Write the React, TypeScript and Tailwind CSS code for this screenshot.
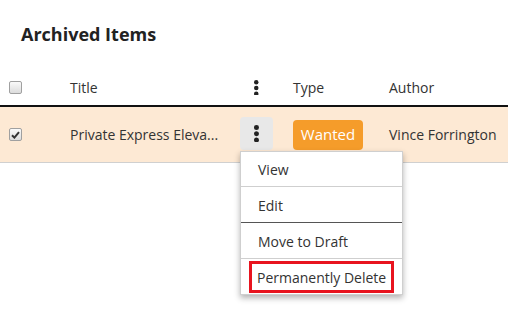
import React from "react";

function Kebab({ size = 4, gap = 2 }: { size?: number; gap?: number }) {
  const h = size * 3 + gap * 2;
  return (
    <svg width={size + 2} height={h} viewBox={`0 0 ${size + 2} ${h}`}>
      {[0, 1, 2].map((i) => (
        <circle key={i} cx={(size + 2) / 2} cy={size / 2 + i * (size + gap)} r={size / 2} fill="#222" />
      ))}
    </svg>
  );
}

function Check({ checked }: { checked?: boolean }) {
  return (
    <span className="relative flex h-[13px] w-[13px] items-center justify-center rounded-[2px] border border-[#a0a0a0] bg-gradient-to-b from-[#fafafa] to-[#dcdcdc]">
      {checked && (
        <svg width="9" height="8" viewBox="0 0 9 8">
          <path d="M1 4.2 L3.4 6.6 L8 1.2" stroke="#333" strokeWidth="2" fill="none" />
        </svg>
      )}
    </span>
  );
}

export default function App() {
  return (
    <div
      className="relative h-[312px] w-[508px] overflow-hidden bg-white text-[14px] text-[#333]"
      style={{ fontFamily: '"Open Sans", "Noto Sans", sans-serif' }}
    >
      <div className="h-[70px] px-[21px] pt-[22px] text-[18px] font-bold leading-[24px] text-[#222]">
        Archived Items
      </div>
      <div className="flex h-[37px] items-center border-b-2 border-[#111]">
        <div className="w-[70px] pl-[9px]">
          <Check />
        </div>
        <div className="w-[170px]">Title</div>
        <div className="flex w-[33px] justify-center">
          <Kebab size={4.5} gap={1.2} />
        </div>
        <div className="w-[20px]" />
        <div className="w-[96px]">Type</div>
        <div>Author</div>
      </div>
      <div className="flex h-[56px] items-center border-b border-[#d0d0d0] bg-[#fde9d4]">
        <div className="w-[70px] pl-[9px]">
          <Check checked />
        </div>
        <div className="w-[170px] whitespace-nowrap">Private Express Eleva...</div>
        <div className="mb-[2px] flex h-[33px] w-[33px] items-center justify-center rounded-[4px] bg-[#e8e8e8]">
          <Kebab size={5} gap={1.2} />
        </div>
        <div className="w-[20px]" />
        <div className="w-[96px]">
          <div className="flex h-[30px] w-[70px] items-center justify-center rounded-[4px] bg-[#f59c2a] text-[15px] text-white">
            Wanted
          </div>
        </div>
        <div className="whitespace-nowrap">Vince Forrington</div>
      </div>

      <div className="absolute left-[240px] top-[151px] w-[163px] border border-[#cfcfcf] bg-white shadow-[0_3px_6px_rgba(0,0,0,0.3)]">
        <div className="flex h-[35px] items-center border-b border-[#cfcfcf] pl-[17px] pt-[1px]">View</div>
        <div className="flex h-[36px] items-center border-b border-[#555] pl-[17px] pt-[1px]">Edit</div>
        <div className="flex h-[36px] items-center border-b border-[#cfcfcf] pl-[17px] pt-[1px]">Move to Draft</div>
        <div className="flex h-[35px] items-start px-[8px] pt-[2px]">
          <div className="flex h-[32px] w-full items-center border-[3px] border-[#e8141f] pl-[5px]">
            Permanently Delete
          </div>
        </div>
      </div>
    </div>
  );
}
